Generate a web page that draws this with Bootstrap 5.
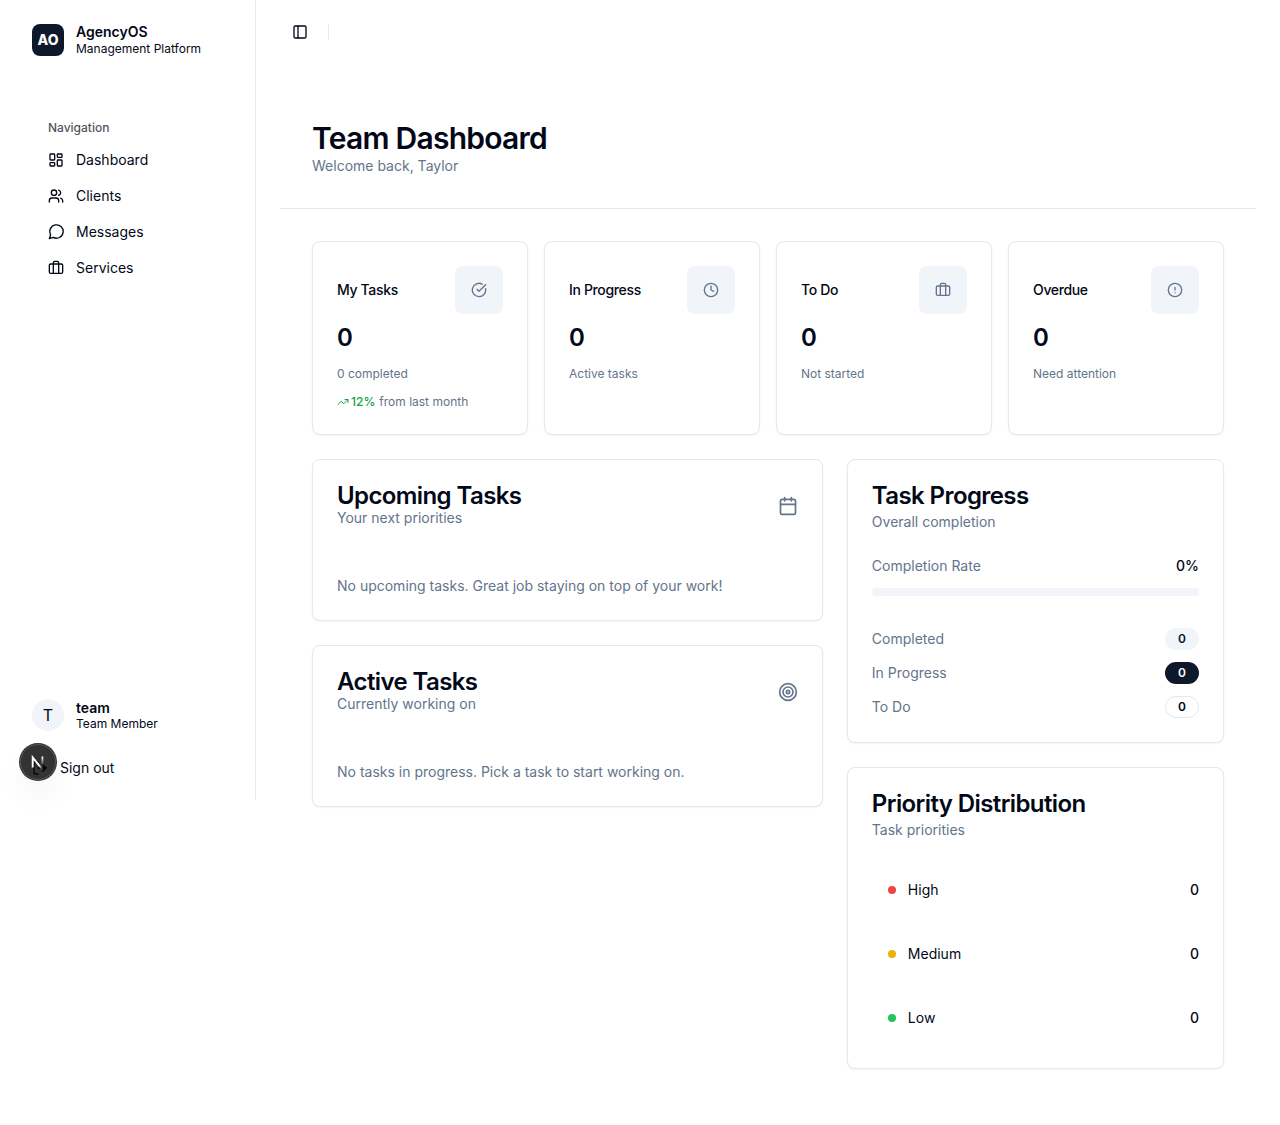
<!DOCTYPE html>
<html lang="en">
<head>
<meta charset="utf-8">
<meta name="viewport" content="width=device-width, initial-scale=1">
<title>AgencyOS – Team Dashboard</title>
<link href="https://cdn.jsdelivr.net/npm/bootstrap@5.3.0/dist/css/bootstrap.min.css" rel="stylesheet">
<style>
:root{--fg:#020817;--ink:#0f172a;--line:#e2e8f0;--soft:#f1f5f9;--mute:#64748b}
body{font-family:Inter,"Liberation Sans",sans-serif;font-size:14px;line-height:20px;color:var(--fg);background:#fff;min-height:1125px}
svg.ic{width:16px;height:16px;fill:none;stroke:currentColor;stroke-width:2;stroke-linecap:round;stroke-linejoin:round;flex:none;display:block}
svg.ic-lg{width:20px;height:20px}
.sidebar{width:256px;height:800px;border-right:1px solid var(--line);flex:none;padding:24px 16px 16px}
.brand{gap:12px;padding:0 16px;height:32px}
.brand-mark{width:32px;height:32px;border-radius:8px;background:var(--ink);color:#f8fafc;font-weight:800;font-size:14px}
.two-line b{display:block;font-weight:600;line-height:17.5px}
.two-line span{display:block;font-size:12px;line-height:16px}
.account .two-line span{line-height:15px}
.nav-title{font-size:12px;font-weight:500;opacity:.7;padding:0 8px;height:32px;line-height:32px}
.side-nav{padding:56px 24px 0}
.side-nav .nav-link{height:32px;padding:0;gap:12px;color:var(--fg)}
.side-nav .nav{gap:4px;padding-left:8px}
.avatar{width:32px;height:32px;background:var(--soft);font-size:16px}
.signout{height:32px;padding-left:16px;margin-top:21px;gap:12px}
.dev-badge{left:19px;top:743px;width:38px;height:38px;box-shadow:0 16px 32px -8px rgba(0,0,0,.12)}
.topbar{height:64px;padding:0 36px;gap:20px}
.divider{width:1px;height:16px;background:var(--line)}
.page{padding:24px}
.page-head{padding:32px;border-bottom:1px solid var(--line)}
h1{font-size:30px;line-height:36px;font-weight:600;letter-spacing:-.75px;margin:0}
.muted{color:var(--mute)}
.page-body{padding:32px;display:flex;flex-direction:column;gap:24px}
.panel{border:1px solid var(--line);border-radius:8px;padding:24px;box-shadow:0 1px 2px rgba(0,0,0,.05);background:#fff}
.stats{display:grid;grid-template-columns:repeat(4,1fr);gap:16px}
.stat-name{font-weight:500;letter-spacing:-.35px}
.stat-icon{width:48px;height:48px;border-radius:8px;background:var(--soft);color:var(--mute)}
.stat-val{font-size:24px;line-height:32px;font-weight:600;margin-top:8px}
.stat-sub{font-size:12px;line-height:16px;color:var(--mute);margin-top:12px}
.trend b{color:#16a34a;font-weight:500}
.trend svg.ic{width:12px;height:12px;color:#16a34a;margin-right:2px}
.columns{display:grid;grid-template-columns:repeat(7,1fr);gap:24px;align-items:start}
.col-main{grid-column:span 4;display:grid;gap:24px}
.col-side{grid-column:span 3;display:grid;gap:24px}
h2{font-size:24px;line-height:24px;font-weight:600;letter-spacing:-.6px;margin:0}
.empty-note{padding-top:48px;margin:0}
.meter{height:8px;border-radius:8px;background:var(--soft);margin-top:12px}
.counts{margin-top:32px;gap:12px}
.counts>div{height:22px}
.pill{width:34px;height:22px;font-size:12px;line-height:20px;font-weight:600;text-align:center;border-radius:11px;border:1px solid transparent}
.pill-soft{background:var(--soft);color:var(--ink)}
.pill-dark{background:var(--ink);color:#f8fafc}
.pill-line{border-color:var(--line)}
.prio{gap:12px;margin-top:24px}
.prio>div{height:52px;padding-left:16px}
.dot{width:8px;height:8px;margin-right:12px}
.dot-high{background:#ef4444}
.dot-medium{background:#eab308}
.dot-low{background:#22c55e}
.medium{font-weight:500}
</style>
</head>
<body>
<div class="d-flex align-items-start">
  <aside class="sidebar d-flex flex-column">
    <div class="brand d-flex align-items-center">
      <div class="brand-mark d-flex align-items-center justify-content-center">AO</div>
      <div class="two-line"><b>AgencyOS</b><span>Management Platform</span></div>
    </div>
    <div class="side-nav">
      <div class="nav-title">Navigation</div>
      <nav class="nav flex-column">
        <a class="nav-link d-flex align-items-center" href="#"><svg class="ic" viewBox="0 0 24 24"><rect width="7" height="9" x="3" y="3" rx="1"/><rect width="7" height="5" x="14" y="3" rx="1"/><rect width="7" height="9" x="14" y="12" rx="1"/><rect width="7" height="5" x="3" y="16" rx="1"/></svg>Dashboard</a>
        <a class="nav-link d-flex align-items-center" href="#"><svg class="ic" viewBox="0 0 24 24"><path d="M16 21v-2a4 4 0 0 0-4-4H6a4 4 0 0 0-4 4v2"/><circle cx="9" cy="7" r="4"/><path d="M22 21v-2a4 4 0 0 0-3-3.870M16 3.130a4 4 0 0 1 0 7.750"/></svg>Clients</a>
        <a class="nav-link d-flex align-items-center" href="#"><svg class="ic" viewBox="0 0 24 24"><path d="M7.900 20A10 10 0 1 0 4 16.100L2 22Z"/></svg>Messages</a>
        <a class="nav-link d-flex align-items-center" href="#"><svg class="ic" viewBox="0 0 24 24"><path d="M16 20V4a2 2 0 0 0-2-2h-4a2 2 0 0 0-2 2v16"/><rect width="20" height="14" x="2" y="6" rx="2"/></svg>Services</a>
      </nav>
    </div>
    <div class="mt-auto">
      <div class="brand account d-flex align-items-center">
        <div class="avatar rounded-circle d-flex align-items-center justify-content-center">T</div>
        <div class="two-line"><b>team</b><span>Team Member</span></div>
      </div>
      <div class="signout d-flex align-items-center"><svg class="ic" viewBox="0 0 24 24"><path d="M9 21H5a2 2 0 0 1-2-2V5a2 2 0 0 1 2-2h4"/><path d="m16 17 5-5-5-5M21 12H9"/></svg>Sign out</div>
    </div>
  </aside>
  <main class="flex-grow-1">
    <header class="topbar d-flex align-items-center">
      <svg class="ic" viewBox="0 0 24 24"><rect width="18" height="18" x="3" y="3" rx="2"/><path d="M9 3v18"/></svg>
      <div class="divider"></div>
    </header>
    <div class="page">
      <div class="page-head"><h1>Team Dashboard</h1><div class="muted">Welcome back, Taylor</div></div>
      <div class="page-body">
        <section class="stats">
          <div class="panel">
            <div class="d-flex align-items-center justify-content-between"><span class="stat-name">My Tasks</span><div class="stat-icon d-flex align-items-center justify-content-center"><svg class="ic" viewBox="0 0 24 24"><path d="M21.801 10A10 10 0 1 1 17 3.335"/><path d="m9 11 3 3L22 4"/></svg></div></div>
            <div class="stat-val">0</div><div class="stat-sub">0 completed</div>
            <div class="stat-sub trend d-flex align-items-center"><svg class="ic" viewBox="0 0 24 24"><path d="m22 7-8.500 8.500-5-5L2 17"/><path d="M16 7h6v6"/></svg><b>12%</b><span class="ms-1">from last month</span></div>
          </div>
          <div class="panel">
            <div class="d-flex align-items-center justify-content-between"><span class="stat-name">In Progress</span><div class="stat-icon d-flex align-items-center justify-content-center"><svg class="ic" viewBox="0 0 24 24"><circle cx="12" cy="12" r="10"/><path d="M12 6v6l4 2"/></svg></div></div>
            <div class="stat-val">0</div><div class="stat-sub">Active tasks</div>
          </div>
          <div class="panel">
            <div class="d-flex align-items-center justify-content-between"><span class="stat-name">To Do</span><div class="stat-icon d-flex align-items-center justify-content-center"><svg class="ic" viewBox="0 0 24 24"><path d="M16 20V4a2 2 0 0 0-2-2h-4a2 2 0 0 0-2 2v16"/><rect width="20" height="14" x="2" y="6" rx="2"/></svg></div></div>
            <div class="stat-val">0</div><div class="stat-sub">Not started</div>
          </div>
          <div class="panel">
            <div class="d-flex align-items-center justify-content-between"><span class="stat-name">Overdue</span><div class="stat-icon d-flex align-items-center justify-content-center"><svg class="ic" viewBox="0 0 24 24"><circle cx="12" cy="12" r="10"/><path d="M12 8v4M12 16h.01"/></svg></div></div>
            <div class="stat-val">0</div><div class="stat-sub">Need attention</div>
          </div>
        </section>
        <section class="columns">
          <div class="col-main">
            <div class="panel">
              <div class="d-flex align-items-center justify-content-between"><div><h2>Upcoming Tasks</h2><div class="muted">Your next priorities</div></div><svg class="ic ic-lg muted" viewBox="0 0 24 24"><path d="M8 2v4M16 2v4M3 10h18"/><rect width="18" height="18" x="3" y="4" rx="2"/></svg></div>
              <p class="empty-note muted">No upcoming tasks. Great job staying on top of your work!</p>
            </div>
            <div class="panel">
              <div class="d-flex align-items-center justify-content-between"><div><h2>Active Tasks</h2><div class="muted">Currently working on</div></div><svg class="ic ic-lg muted" viewBox="0 0 24 24"><circle cx="12" cy="12" r="10"/><circle cx="12" cy="12" r="6"/><circle cx="12" cy="12" r="2"/></svg></div>
              <p class="empty-note muted">No tasks in progress. Pick a task to start working on.</p>
            </div>
          </div>
          <div class="col-side">
            <div class="panel">
              <h2>Task Progress</h2><div class="muted mt-1">Overall completion</div>
              <div class="d-flex justify-content-between mt-4"><span class="muted">Completion Rate</span><span class="medium">0%</span></div>
              <div class="meter"></div>
              <div class="counts d-flex flex-column">
                <div class="d-flex align-items-center justify-content-between"><span class="muted">Completed</span><span class="pill pill-soft">0</span></div>
                <div class="d-flex align-items-center justify-content-between"><span class="muted">In Progress</span><span class="pill pill-dark">0</span></div>
                <div class="d-flex align-items-center justify-content-between"><span class="muted">To Do</span><span class="pill pill-line">0</span></div>
              </div>
            </div>
            <div class="panel">
              <h2>Priority Distribution</h2><div class="muted mt-1">Task priorities</div>
              <div class="prio d-flex flex-column">
                <div class="d-flex align-items-center"><i class="dot dot-high rounded-circle"></i>High<span class="medium ms-auto">0</span></div>
                <div class="d-flex align-items-center"><i class="dot dot-medium rounded-circle"></i>Medium<span class="medium ms-auto">0</span></div>
                <div class="d-flex align-items-center"><i class="dot dot-low rounded-circle"></i>Low<span class="medium ms-auto">0</span></div>
              </div>
            </div>
          </div>
        </section>
      </div>
    </div>
  </main>
</div>
<div class="dev-badge position-absolute rounded-circle">
  <svg width="38" height="38" viewBox="0 0 38 38" class="d-block">
    <defs><linearGradient id="ng" gradientUnits="userSpaceOnUse" x1="19" y1="19" x2="24" y2="26"><stop offset=".4" stop-color="#fff"/><stop offset="1" stop-color="#fff" stop-opacity="0"/></linearGradient>
    <linearGradient id="nv" x1="0" y1="0" x2="0" y2="1"><stop offset="0" stop-color="#fff"/><stop offset="1" stop-color="#fff" stop-opacity="0"/></linearGradient></defs>
    <circle cx="19" cy="19" r="19" fill="#000" fill-opacity=".8"/>
    <circle cx="19" cy="19" r="17.500" fill="none" stroke="#fff" stroke-opacity=".17"/>
    <path d="M13.700 24.500V14.500L23 26" fill="none" stroke="url(#ng)" stroke-width="1.900"/>
    <rect x="22.500" y="13.500" width="1.800" height="9" fill="url(#nv)"/>
  </svg>
</div>
<script src="https://cdn.jsdelivr.net/npm/bootstrap@5.3.0/dist/js/bootstrap.bundle.min.js"></script>
</body>
</html>
